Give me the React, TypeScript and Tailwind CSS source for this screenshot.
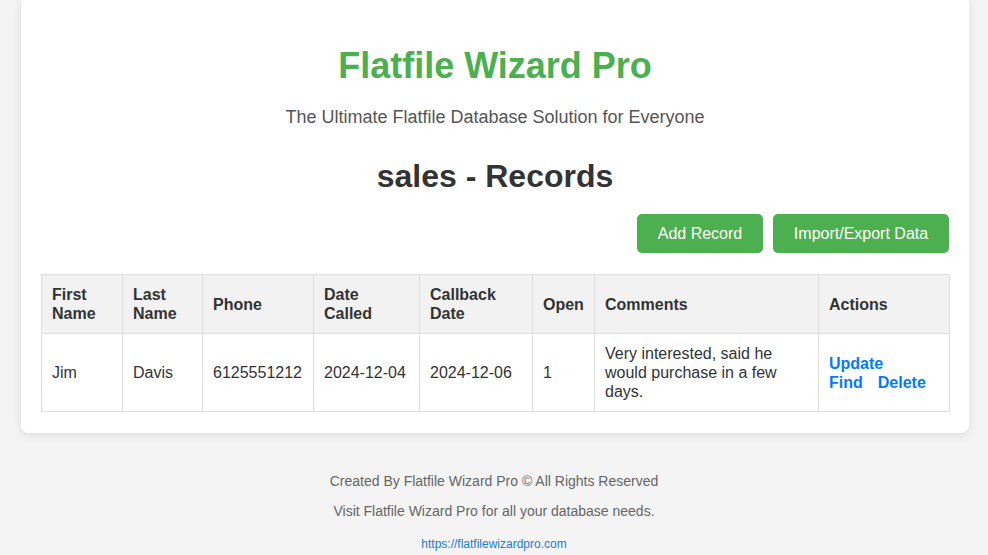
import React from "react";

const cols = [81, 80, 111, 106, 113, 62, 224, 131];

export default function App() {
  const th = "border border-[#ddd] bg-[#f2f2f2] px-[10px] py-[10px] text-left align-middle font-bold leading-[19px]";
  const td = "border border-[#ddd] px-[10px] py-[10px] text-left align-middle leading-[19px]";
  return (
    <div className="min-h-[555px] bg-[#f4f4f4] text-[#333]" style={{ fontFamily: '"Liberation Sans", Arial, sans-serif' }}>
      <div className="ml-[21px] mr-[19px] rounded-b-lg bg-white px-5 pb-[21px] pt-[45px] shadow-[0_2px_10px_rgba(0,0,0,0.1)]">
        <h1 className="text-center text-[36px] font-bold leading-[42px] text-[#4CAF50]">Flatfile Wizard Pro</h1>
        <p className="mt-[19px] text-center text-[18px] leading-[22px] text-[#555]">The Ultimate Flatfile Database Solution for Everyone</p>
        <h2 className="mt-[29px] text-center text-[32px] font-bold leading-[38px] text-[#333]">sales - Records</h2>
        <div className="mt-[19px] flex justify-end gap-[10px]">
          <button className="h-[39px] w-[126px] rounded-[5px] bg-[#4CAF50] text-[16px] text-white">Add Record</button>
          <button className="h-[39px] w-[176px] rounded-[5px] bg-[#4CAF50] text-[16px] text-white">Import/Export Data</button>
        </div>
        <table className="mt-[21px] w-full table-fixed border-collapse text-[16px]">
          <colgroup>
            {cols.map((w, i) => (
              <col key={i} style={{ width: w }} />
            ))}
          </colgroup>
          <thead>
            <tr>
              <th className={th}>First<br />Name</th>
              <th className={th}>Last<br />Name</th>
              <th className={th}>Phone</th>
              <th className={th}>Date<br />Called</th>
              <th className={th}>Callback<br />Date</th>
              <th className={th}>Open</th>
              <th className={th}>Comments</th>
              <th className={th}>Actions</th>
            </tr>
          </thead>
          <tbody>
            <tr>
              <td className={td}>Jim</td>
              <td className={td}>Davis</td>
              <td className={td + " whitespace-nowrap"}>6125551212</td>
              <td className={td + " whitespace-nowrap"}>2024-12-04</td>
              <td className={td + " whitespace-nowrap"}>2024-12-06</td>
              <td className={td}>1</td>
              <td className={td}>Very interested, said he would purchase in a few days.</td>
              <td className={td}>
                <div className="font-bold text-[#007BFF]">Update</div>
                <div className="flex gap-[15px] font-bold text-[#007BFF]">
                  <span>Find</span>
                  <span>Delete</span>
                </div>
              </td>
            </tr>
          </tbody>
        </table>
      </div>
      <footer className="pt-[38px] text-center text-[#666]">
        <p className="text-[14px] leading-[20px]">Created By Flatfile Wizard Pro © All Rights Reserved</p>
        <p className="mt-[10px] text-[14px] leading-[20px]">Visit Flatfile Wizard Pro for all your database needs.</p>
        <p className="mt-[16px] text-[12px] leading-[14px] text-[#1a7be0]">https://flatfilewizardpro.com</p>
      </footer>
    </div>
  );
}
